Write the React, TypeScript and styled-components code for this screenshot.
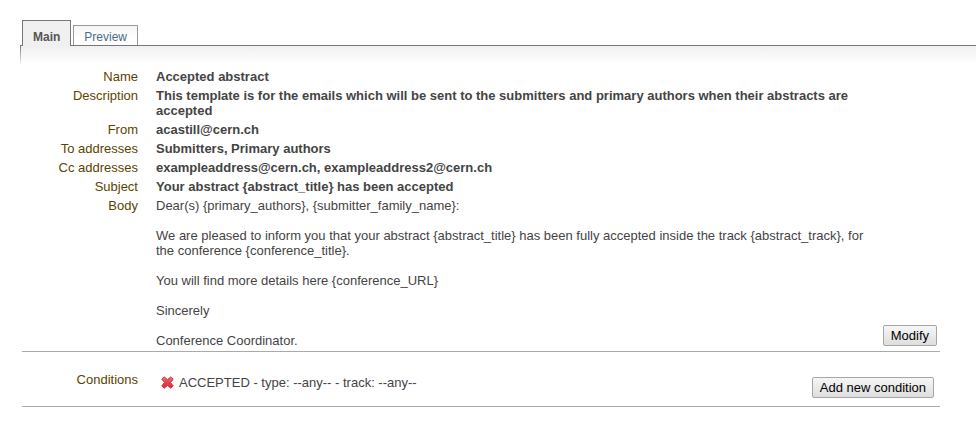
import React from "react";
import styled, { createGlobalStyle, css } from "styled-components";

const GlobalStyle = createGlobalStyle`
  *, *::before, *::after { box-sizing: border-box; }
  body {
    margin: 0;
    background: #fff;
    color: #444;
    font: 13px/15px "Liberation Sans", Arial, sans-serif;
  }
`;

const Page = styled.main`
  padding: 20px 0 28px 20px;
`;

const TabBar = styled.div`
  display: flex;
  align-items: flex-end;
  gap: 2px;
  height: 25px;
  padding-left: 2px;
`;

const Tab = styled.button<{ $active?: boolean }>`
  position: relative;
  margin: 0;
  padding: 2px 10px 0;
  height: 20px;
  border: 1px solid #999;
  border-bottom: 0;
  background: linear-gradient(#f3f5f7, #fff 60%);
  color: #4a6b8c;
  font: 12px/16px "Liberation Sans", Arial, sans-serif;
  cursor: pointer;
  ${({ $active }) =>
    $active &&
    css`
      z-index: 1;
      height: 26px;
      margin-bottom: -1px;
      padding-top: 7px;
      border-color: #777;
      background: #f0f0f0;
      color: #555;
      font-weight: bold;
    `}
`;

const Panel = styled.section`
  border-top: 1px solid #777;
  padding: 23px 36px 0 2px;
  background:
    linear-gradient(#777, #fff) 0 0 / 1px 20px no-repeat,
    linear-gradient(#f0f0f0, #fff) 0 0 / 100% 18px no-repeat;
`;

const Group = styled.div`
  display: grid;
  grid-template-columns: minmax(0, 1fr) auto;
  column-gap: 6px;
  padding: 0 3px 3px 0;
  border-bottom: 1px solid #aaa;
`;

const Fields = styled.dl`
  display: grid;
  grid-template-columns: 116px minmax(0, 1fr);
  align-content: start;
  gap: 4px 18px;
  margin: 0;
`;

const Label = styled.dt`
  color: #5b4400;
  text-align: right;
`;

const Value = styled.dd<{ $strong?: boolean }>`
  margin: 0;
  font-weight: ${({ $strong }) => ($strong ? "bold" : "normal")};
`;

const Paragraph = styled.p`
  margin: 0 0 15px;
  &:last-child { margin-bottom: 0; }
`;

const Button = styled.button`
  align-self: end;
  margin: 5px 0 2px;
  height: 21px;
  padding: 0 7px;
  border: 1px solid #a6a6a6;
  border-radius: 2px;
  background: linear-gradient(#f6f6f6, #dedede);
  color: #000;
  font: 13px/15px "Liberation Sans", Arial, sans-serif;
  white-space: nowrap;
  cursor: pointer;
`;

const Conditions = styled(Group)`
  padding: 20px 6px 6px 0;
`;

const ConditionList = styled.ul`
  margin: 0;
  padding: 3px 0 0 5px;
  list-style: none;
`;

const Condition = styled.li`
  display: flex;
  align-items: center;
  gap: 5px;
`;

const RemoveButton = styled.button`
  display: flex;
  margin: 0;
  padding: 0;
  border: 0;
  background: none;
  cursor: pointer;
`;

function RemoveIcon() {
  return (
    <svg width="13" height="13" viewBox="0 0 13 13" aria-hidden="true">
      <defs>
        <linearGradient id="cross" x1="0" y1="0" x2="0" y2="1">
          <stop offset="0" stopColor="#ee7a72" />
          <stop offset="0.5" stopColor="#e2404a" />
          <stop offset="1" stopColor="#f0283c" />
        </linearGradient>
      </defs>
      <path
        d="M3.2.9 6.5 3.6 9.8.9 12.2 3.2 9.4 6.5 12.2 9.8 9.8 12.2 6.5 9.4 3.2 12.2.8 9.8 3.6 6.5.8 3.2Z"
        fill="url(#cross)"
        stroke="#c5363f"
        strokeLinejoin="round"
      />
    </svg>
  );
}

const fields = [
  ["Name", "Accepted abstract"],
  [
    "Description",
    "This template is for the emails which will be sent to the submitters and primary authors when their abstracts are accepted",
  ],
  ["From", "acastill@cern.ch"],
  ["To addresses", "Submitters, Primary authors"],
  ["Cc addresses", "exampleaddress@cern.ch, exampleaddress2@cern.ch"],
  ["Subject", "Your abstract {abstract_title} has been accepted"],
];

const body = [
  "Dear(s) {primary_authors}, {submitter_family_name}:",
  "We are pleased to inform you that your abstract {abstract_title} has been fully accepted inside the track {abstract_track}, for the conference {conference_title}.",
  "You will find more details here {conference_URL}",
  "Sincerely",
  "Conference Coordinator.",
];

export default function App() {
  return (
    <>
      <GlobalStyle />
      <Page>
        <TabBar role="tablist">
          <Tab $active id="tab-main" role="tab" aria-selected="true" aria-controls="panel-main">
            Main
          </Tab>
          <Tab role="tab" aria-selected="false">
            Preview
          </Tab>
        </TabBar>
        <Panel id="panel-main" role="tabpanel" aria-labelledby="tab-main">
          <Group>
            <Fields>
              {fields.map(([label, value]) => (
                <React.Fragment key={label}>
                  <Label>{label}</Label>
                  <Value $strong>{value}</Value>
                </React.Fragment>
              ))}
              <Label>Body</Label>
              <Value>
                {body.map((text) => (
                  <Paragraph key={text}>{text}</Paragraph>
                ))}
              </Value>
            </Fields>
            <Button type="button">Modify</Button>
          </Group>
          <Conditions>
            <Fields>
              <Label>Conditions</Label>
              <Value>
                <ConditionList>
                  <Condition>
                    <RemoveButton type="button" aria-label="Remove condition">
                      <RemoveIcon />
                    </RemoveButton>
                    <span>ACCEPTED - type: --any-- - track: --any--</span>
                  </Condition>
                </ConditionList>
              </Value>
            </Fields>
            <Button type="button">Add new condition</Button>
          </Conditions>
        </Panel>
      </Page>
    </>
  );
}
